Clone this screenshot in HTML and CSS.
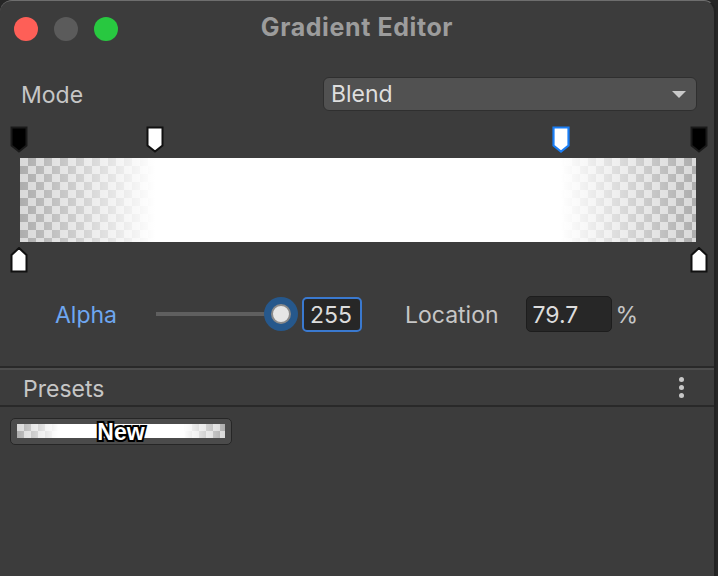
FILE: index.html
```html
<!DOCTYPE html>
<html>
<head>
<meta charset="utf-8">
<link rel="stylesheet" href="styles.css">
</head>
<body>
<div class="window">
  <div class="titlebar">
    <div class="lights">
      <span class="light red"></span>
      <span class="light gray"></span>
      <span class="light green"></span>
    </div>
    <div class="title">Gradient Editor</div>
  </div>

  <div class="mode-row">
    <span class="label">Mode</span>
    <div class="dropdown">
      <span>Blend</span>
      <svg class="arrow" width="14" height="8" viewBox="0 0 14 8"><polygon points="0,0 14,0 7,7" fill="#c9c9c9"/></svg>
    </div>
  </div>

  <div class="editor">
    <div class="marker-strip top">
      <svg class="marker" style="left:0%" width="18" height="27" viewBox="0 0 18 27"><polygon points="1.5,1.5 16.5,1.5 16.5,19.5 9,25.5 1.5,19.5" fill="#000" stroke="#1a1a1a" stroke-width="2"/></svg>
      <svg class="marker" style="left:20%" width="18" height="27" viewBox="0 0 18 27"><polygon points="1.5,1.5 16.5,1.5 16.5,19.5 9,25.5 1.5,19.5" fill="#fff" stroke="#111" stroke-width="2"/></svg>
      <svg class="marker" style="left:79.7%" width="18" height="27" viewBox="0 0 18 27"><polygon points="1.5,1.5 16.5,1.5 16.5,19.5 9,25.5 1.5,19.5" fill="#fff" stroke="#1a7ef6" stroke-width="2.2"/></svg>
      <svg class="marker" style="left:100%" width="18" height="27" viewBox="0 0 18 27"><polygon points="1.5,1.5 16.5,1.5 16.5,19.5 9,25.5 1.5,19.5" fill="#000" stroke="#1a1a1a" stroke-width="2"/></svg>
    </div>
    <div class="gradient-bar"><div class="gradient-fill"></div></div>
    <div class="marker-strip bottom">
      <svg class="marker" style="left:0%" width="18" height="26" viewBox="0 0 18 26"><polygon points="9,1 16.5,8 16.5,24.5 1.5,24.5 1.5,8" fill="#fff" stroke="#111" stroke-width="2"/></svg>
      <svg class="marker" style="left:100%" width="18" height="26" viewBox="0 0 18 26"><polygon points="9,1 16.5,8 16.5,24.5 1.5,24.5 1.5,8" fill="#fff" stroke="#111" stroke-width="2"/></svg>
    </div>
  </div>

  <div class="alpha-row">
    <span class="alpha-label">Alpha</span>
    <div class="slider">
      <div class="track"></div>
      <div class="thumb"><div class="thumb-inner"></div></div>
    </div>
    <div class="field focused">255</div>
    <span class="label loc-label">Location</span>
    <div class="field loc">79.7</div>
    <span class="label pct">%</span>
  </div>

  <div class="presets-header">
    <span class="label">Presets</span>
    <div class="kebab"><i></i><i></i><i></i></div>
  </div>

  <div class="presets-body">
    <div class="preset-btn">
      <div class="preset-preview"><div class="preset-fill"></div></div>
      <span class="preset-text">New</span>
    </div>
  </div>
</div>
</body>
</html>
```

FILE: styles.css
```css
html, body {
  margin: 0;
  padding: 0;
  background: #262626;
  height: 576px;
  overflow: hidden;
}

.window {
  width: 714px;
  height: 575px;
  background: #3c3c3c;
  border-top: 1px solid #6e6e6e;
  border-right: 2px solid #222;
  border-radius: 12px 12px 0 0;
  font-family: Inter, "Noto Sans", sans-serif;
  color: #c6c6c6;
  position: relative;
}

.titlebar {
  height: 55px;
  display: flex;
  align-items: center;
  position: relative;
}

.lights {
  display: flex;
  gap: 16px;
  padding-left: 14px;
}

.light {
  width: 24px;
  height: 24px;
  border-radius: 50%;
  display: block;
}
.light.red { background: #fe5f57; }
.light.gray { background: #5b5b5b; }
.light.green { background: #28c840; }

.title {
  position: absolute;
  left: 0;
  right: 0;
  top: 11px;
  text-align: center;
  font-weight: 700;
  font-size: 25px;
  color: #9c9c9c;
  letter-spacing: 0.6px;
  line-height: 30px;
}

.mode-row {
  display: flex;
  align-items: center;
  margin-top: 21px;
  height: 34px;
  padding: 0 17px 0 21px;
}

.label {
  font-size: 23px;
  color: #c6c6c6;
  padding-top: 2px;
}

.dropdown {
  margin-left: auto;
  width: 355px;
  height: 32px;
  background: #515151;
  border: 1px solid #2f2f2f;
  border-radius: 6px;
  display: flex;
  align-items: center;
  justify-content: space-between;
  padding: 0 10px 0 7px;
  font-size: 23px;
  color: #dedede;
}

.arrow { margin-top: 2px; }

.editor {
  margin-top: 15px;
  padding: 0 0 0 19px;
}

.marker-strip {
  position: relative;
  height: 26px;
  width: 680px;
}
.marker-strip.bottom {
  height: 25px;
  margin-top: 6px;
}

.marker {
  position: absolute;
  top: 0;
  margin-left: -9px;
}
.marker-strip.bottom .marker { top: -1px; }

.gradient-bar {
  margin-top: 6px;
  margin-left: 1px;
  width: 676px;
  height: 84px;
  background: conic-gradient(#adadad 25%, #d9d9d9 0 50%, #adadad 0 75%, #d9d9d9 0) 0 0 / 16px 16px;
}

.gradient-fill {
  width: 100%;
  height: 100%;
  background: linear-gradient(to right, rgba(255,255,255,0) 0%, #fff 20%, #fff 80%, rgba(255,255,255,0) 100%);
}

.alpha-row {
  display: flex;
  align-items: center;
  height: 36px;
  margin-top: 23px;
  padding-left: 55px;
}

.alpha-label {
  font-size: 23px;
  color: #6ea7f1;
  width: 101px;
  padding-top: 2px;
}

.slider {
  position: relative;
  width: 142px;
  height: 36px;
  display: flex;
  align-items: center;
}

.track {
  width: 112px;
  height: 4px;
  background: #5f5f5f;
}

.thumb {
  position: absolute;
  left: 108px;
  top: 1px;
  width: 34px;
  height: 34px;
  border-radius: 50%;
  background: #26588c;
  display: flex;
  align-items: center;
  justify-content: center;
}

.thumb-inner {
  width: 16px;
  height: 16px;
  border-radius: 50%;
  background: #e6e6e6;
  border: 2px solid #8a8a8a;
}

.field {
  height: 33px;
  box-sizing: border-box;
  border-radius: 5px;
  background: #272727;
  border: 1px solid #1d1d1d;
  font-size: 23px;
  color: #dcdcdc;
  display: flex;
  align-items: center;
  padding-left: 6px;
  padding-top: 2px;
}

.field.focused {
  width: 60px;
  height: 35px;
  border: 2px solid #3a79cf;
  margin-left: 4px;
}

.loc-label { margin-left: 43px; }

.field.loc {
  width: 86px;
  height: 36px;
  margin-left: 27px;
}

.pct { margin-left: 4px; }

.presets-header {
  margin-top: 34px;
  border-top: 2px solid #292929;
  box-shadow: inset 0 2px 0 #4c4c4c;
  border-bottom: 2px solid #292929;
  display: flex;
  align-items: center;
  padding: 2px 30px 0 23px;
  box-sizing: border-box;
  height: 41px;
  justify-content: space-between;
}

.kebab {
  display: flex;
  flex-direction: column;
  gap: 3px;
}
.kebab i {
  display: block;
  width: 5px;
  height: 5px;
  border-radius: 50%;
  background: #c8c8c8;
}

.presets-body {
  padding: 11px 0 0 10px;
}

.preset-btn {
  width: 220px;
  height: 25px;
  background: #4b4b4b;
  border: 1px solid #262626;
  border-radius: 5px;
  position: relative;
  display: flex;
  align-items: center;
  justify-content: center;
}

.preset-preview {
  position: absolute;
  left: 6px;
  top: 5px;
  width: 208px;
  height: 14px;
  background: conic-gradient(#adadad 25%, #d9d9d9 0 50%, #adadad 0 75%, #d9d9d9 0) 0 0 / 14px 14px;
}

.preset-fill {
  width: 100%;
  height: 100%;
  background: linear-gradient(to right, rgba(255,255,255,0) 0%, #fff 20%, #fff 80%, rgba(255,255,255,0) 100%);
}

.preset-text {
  position: relative;
  font-weight: 700;
  font-size: 23px;
  color: #fff;
  font-family: "Liberation Sans", Arial, sans-serif;
  -webkit-text-stroke: 4px #000;
  paint-order: stroke fill;
  line-height: 24px;
}
```
